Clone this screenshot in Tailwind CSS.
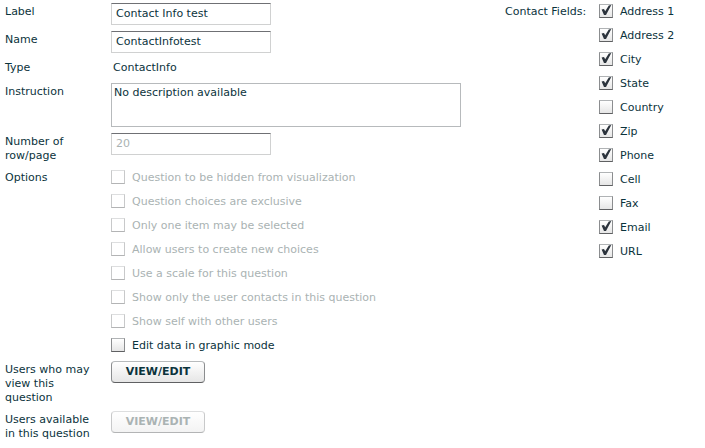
<!DOCTYPE html>
<html lang="en">
<head>
<meta charset="utf-8">
<title>Question settings</title>
<script src="https://cdn.jsdelivr.net/npm/@tailwindcss/browser@4"></script>
</head>
<body class="bg-white font-['DejaVu_Sans',Verdana,sans-serif] text-[11px] leading-[14px] text-[#0b333c]">
<form class="flex items-start justify-between pt-[3px] pl-[5px]">
  <div class="grid grid-cols-[106px_minmax(0,350px)] gap-y-1.5 grow">
    <label for="label" class="pt-0.5">Label</label>
    <input id="label" type="text" value="Contact Info test" class="h-[22px] w-40 border border-[#d0d1d1] border-t-[#6f7074] px-1 pb-px">

    <label for="name" class="pt-0.5">Name</label>
    <input id="name" type="text" value="ContactInfotest" class="h-[22px] w-40 border border-[#d0d1d1] border-t-[#6f7074] px-1 pb-px">

    <div class="pt-0.5 pb-0.5">Type</div>
    <div class="pt-0.5 pl-0.5">ContactInfo</div>

    <label for="instruction" class="pt-0.5">Instruction</label>
    <textarea id="instruction" class="h-11 w-full resize-none border border-[#b7babc] px-0.5 pt-0.5">No description available</textarea>

    <label for="rows" class="pr-6 pt-0.5">Number of row/page</label>
    <input id="rows" type="text" value="20" disabled class="h-[22px] w-40 border border-[#d0d1d1] border-t-[#6f7074] px-1 pb-px text-[#aab3b3]">

    <div id="options" class="pt-0.5">Options</div>
    <div role="group" aria-labelledby="options" class="flex flex-col items-start gap-2.5 pt-px pb-[3px]" data-list="options"></div>

    <label for="viewers" class="pr-4 pt-0.5">Users who may view this question</label>
    <div><button id="viewers" type="button" class="h-[22px] w-[94px] rounded-sm border border-[#8b8d8f] border-t-[#b7babc] border-b-[#5f6062] bg-linear-to-b from-white to-[#e6e6e6] pb-px font-bold">VIEW/EDIT</button></div>

    <label for="available" class="pr-2 pt-0.5">Users available <span class="whitespace-nowrap">in this question</span></label>
    <div><button id="available" type="button" disabled class="h-[22px] w-[94px] rounded-sm border border-[#c8c9ca] border-t-[#dddedf] border-b-[#b3b4b5] bg-linear-to-b from-white to-[#f3f3f3] pb-px font-bold text-[#aab3b3]">VIEW/EDIT</button></div>
  </div>

  <div class="flex shrink-0">
    <div id="fields" class="w-[94px] pt-0.5">Contact Fields:</div>
    <div role="group" aria-labelledby="fields" class="flex w-[106px] flex-col items-start gap-2.5 pt-px" data-list="fields"></div>
  </div>
</form>

<template id="checkbox">
  <label class="flex h-3.5 items-start gap-[7px] leading-4 whitespace-nowrap has-disabled:text-[#aab3b3]">
    <span class="grid size-3.5 *:col-start-1 *:row-start-1">
      <input type="checkbox" class="peer size-3.5 appearance-none border border-[#8b8d8f] border-t-[#b0b3b5] border-b-[#5f6062] bg-linear-to-b from-white to-[#e6e6e6] disabled:border-[#c8c9ca] disabled:border-t-[#dddedf] disabled:border-b-[#b3b4b5] disabled:to-white">
      <svg viewBox="0 0 14 14" class="pointer-events-none invisible size-3.5 peer-checked:visible" fill="#2b333c" aria-hidden="true"><path d="M2.6 5.4 L5 5 L6.2 7.2 L9.8 1.6 L12.3 1 L7 10.9 L5 10.9 Z"/></svg>
    </span>
    <span></span>
  </label>
</template>

<script>
  const lists = {
    options: [
      ["Question to be hidden from visualization", false, true],
      ["Question choices are exclusive", false, true],
      ["Only one item may be selected", false, true],
      ["Allow users to create new choices", false, true],
      ["Use a scale for this question", false, true],
      ["Show only the user contacts in this question", false, true],
      ["Show self with other users", false, true],
      ["Edit data in graphic mode", false, false]
    ],
    fields: [
      ["Address 1", true], ["Address 2", true], ["City", true], ["State", true],
      ["Country", false], ["Zip", true], ["Phone", true], ["Cell", false],
      ["Fax", false], ["Email", true], ["URL", true]
    ]
  };
  const template = document.getElementById("checkbox");
  for (const [key, items] of Object.entries(lists)) {
    const list = document.querySelector(`[data-list="${key}"]`);
    for (const [text, checked, disabled = false] of items) {
      const row = template.content.cloneNode(true);
      const input = row.querySelector("input");
      input.checked = checked;
      input.disabled = disabled;
      row.querySelector("label > span:last-child").textContent = text;
      list.append(row);
    }
  }
</script>
</body>
</html>
